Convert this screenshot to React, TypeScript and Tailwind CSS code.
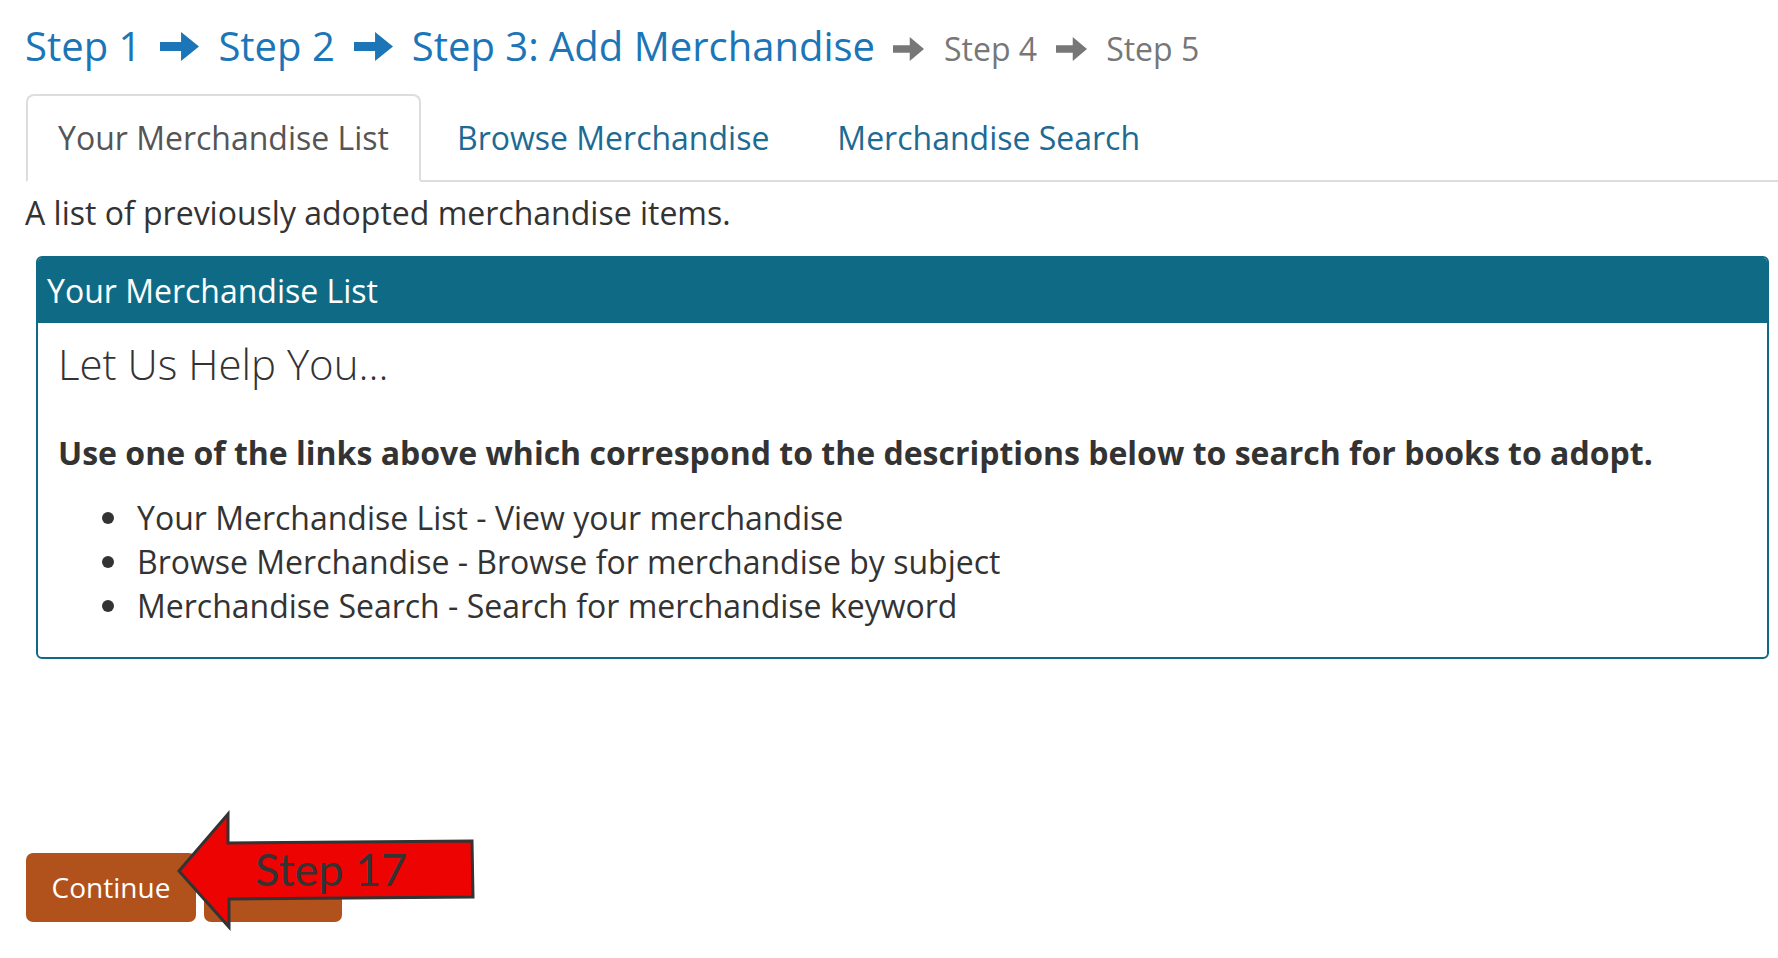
import React from "react";

function BigArrow({ color, w, h }: { color: string; w: number; h: number }) {
  // shaft + triangular head, like a glyphicon arrow-right
  const shaftTop = h * 0.345;
  const shaftBot = h * 0.655;
  const headX = w * 0.54;
  return (
    <svg width={w} height={h} viewBox={`0 0 ${w} ${h}`} className="mb-[5px] shrink-0">
      <polygon
        points={`0,${shaftTop} ${headX},${shaftTop} ${headX},0 ${w},${h / 2} ${headX},${h} ${headX},${shaftBot} 0,${shaftBot}`}
        fill={color}
      />
    </svg>
  );
}

export default function App() {
  return (
    <div className="w-[1778px] min-h-[958px] bg-white pl-[25px] pr-[9px] font-['Open_Sans',sans-serif] text-[#333]">
      {/* Steps heading */}
      <div className="h-[94px] pt-[24px]">
        <div className="flex items-baseline">
          <span className="text-[40px] leading-[44px] text-[#1b75b7]">Step 1</span>
          <span className="mx-[19px] flex items-baseline"><BigArrow color="#1b75b7" w={39} h={29} /></span>
          <span className="text-[40px] leading-[44px] text-[#1b75b7]">Step 2</span>
          <span className="mx-[19px] flex items-baseline"><BigArrow color="#1b75b7" w={39} h={29} /></span>
          <span className="text-[40px] leading-[44px] text-[#1b75b7]">Step 3: Add Merchandise</span>
          <span className="ml-[18px] mr-[20px] flex items-baseline"><BigArrow color="#777777" w={31} h={24} /></span>
          <span className="text-[32px] leading-[44px] text-[#777]">Step 4</span>
          <span className="mx-[19px] flex items-baseline"><BigArrow color="#777777" w={31} h={24} /></span>
          <span className="text-[32px] leading-[44px] text-[#777]">Step 5</span>
        </div>
      </div>

      {/* Tabs */}
      <ul className="ml-[1px] mr-[-9px] flex border-b-2 border-[#dddddd] text-[32px] leading-[44px]">
        <li className="mb-[-2px] mr-[4px] rounded-t-[8px] border-2 border-[#dddddd] border-b-white bg-white px-[30px] py-[20px] text-[#555]">
          Your Merchandise List
        </li>
        <li className="mb-[-2px] mr-[4px] border-2 border-transparent px-[30px] py-[20px] text-[#1d6a93]">
          Browse Merchandise
        </li>
        <li className="mb-[-2px] mr-[4px] border-2 border-transparent px-[30px] py-[20px] text-[#1d6a93]">
          Merchandise Search
        </li>
      </ul>

      <p className="mt-[9px] text-[32px] leading-[44px] text-[#333]">
        A list of previously adopted merchandise items.
      </p>

      {/* Panel */}
      <div className="ml-[11px] mt-[21px] overflow-hidden rounded-[6px] border-2 border-[#0f6b85]">
        <div className="bg-[#0f6b85] pl-[9px] pt-[11px] pb-[10px] text-[32px] leading-[44px] text-white">
          Your Merchandise List
        </div>
        <div className="px-[20px] pt-[17px] pb-[29px]">
          <h3 className="text-[42px] font-light leading-[48px] text-[#333]">Let Us Help You...</h3>
          <p className="mt-[43px] text-[32px] font-bold leading-[44px] text-[#333]">
            Use one of the links above which correspond to the descriptions below to search for books to adopt.
          </p>
          <ul className="mt-[21px] text-[32px] leading-[44px] text-[#333]">
            {[
              "Your Merchandise List - View your merchandise",
              "Browse Merchandise - Browse for merchandise by subject",
              "Merchandise Search - Search for merchandise keyword",
            ].map((t) => (
              <li key={t} className="flex items-center">
                <span className="ml-[44px] mr-[23px] h-[12px] w-[12px] shrink-0 rounded-full bg-[#333]" />
                <span>{t}</span>
              </li>
            ))}
          </ul>
        </div>
      </div>

      {/* Buttons with annotation arrow */}
      <div className="relative ml-[1px] mt-[194px] flex gap-[8px]">
        <button className="w-[170px] rounded-[7px] bg-[#b1521d] py-[14px] text-center text-[28px] leading-[41px] text-white">
          Continue
        </button>
        <button
          aria-label="Cancel"
          className="h-[69px] w-[138px] rounded-[7px] bg-[#b1521d]"
        />
        <svg
          width="320"
          height="130"
          viewBox="0 0 320 130"
          className="pointer-events-none absolute left-[144px] top-[-48px]"
        >
          <polygon
            points="9,66 58,9 58,38 302,36 303,92 59,94 59,122"
            fill="#ee0303"
            stroke="#333333"
            strokeWidth="3"
            strokeLinejoin="miter"
          />
          <text x="85" y="81" fontFamily="Lato, 'Open Sans', sans-serif" fontSize="45" fill="#333333">
            Step 17
          </text>
        </svg>
      </div>
    </div>
  );
}
